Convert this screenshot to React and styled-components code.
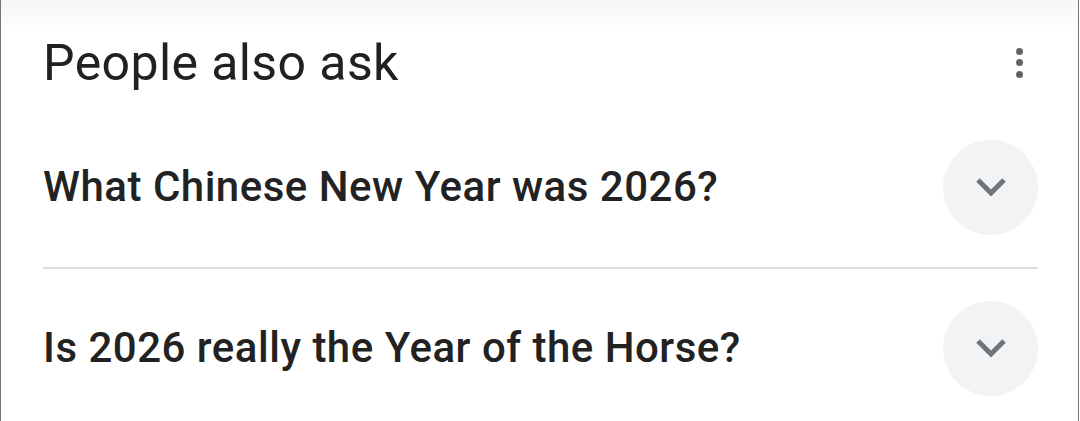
import styled, { createGlobalStyle } from "styled-components";

const GlobalStyle = createGlobalStyle`
  html, body {
    margin: 0;
    padding: 0;
    background: #fff;
  }
  body {
    font-family: Roboto, "Liberation Sans", Arial, sans-serif;
    color: #202124;
  }
`;

const Card = styled.section`
  box-sizing: content-box;
  width: 995px;
  height: 421px;
  padding: 0 40px 0 42px;
  border-left: 1px solid #767676;
  border-right: 1px solid #767676;
  background: linear-gradient(#f6f6f6 0, #fff 32px);
  overflow: hidden;
`;

const Header = styled.div`
  display: flex;
  align-items: center;
  justify-content: space-between;
  height: 89px;
  padding-top: 18px;
`;

const Title = styled.h2`
  margin: 0;
  font-size: 50px;
  font-weight: 400;
  line-height: 60px;
  letter-spacing: 0.4px;
`;

const MenuButton = styled.div`
  display: flex;
  flex-direction: column;
  align-items: center;
  gap: 4.5px;
  width: 24px;
  margin-right: 7px;
`;

const Dot = styled.span`
  width: 7px;
  height: 7px;
  border-radius: 50%;
  background: #5f6368;
`;

const Row = styled.div`
  display: flex;
  align-items: center;
  justify-content: space-between;
  height: 160px;
  box-sizing: border-box;
  border-top: ${(p) => (p.$divided ? "2px solid #dadce0" : "none")};
`;

const Question = styled.span`
  font-size: 42px;
  font-weight: 500;
  line-height: 50px;
  letter-spacing: 0.5px;
  color: #222;
`;

const Toggle = styled.div`
  width: 95px;
  height: 95px;
  border-radius: 50%;
  background: #f1f3f4;
  display: flex;
  align-items: center;
  justify-content: center;
  flex-shrink: 0;
`;

const Chevron = () => (
  <svg width="34" height="22" viewBox="0 0 34 22">
    <polyline
      points="4,4 17,17 30,4"
      fill="none"
      stroke="#70757a"
      strokeWidth="5"
    />
  </svg>
);

const QUESTIONS = [
  "What Chinese New Year was 2026?",
  "Is 2026 really the Year of the Horse?",
];

export default function App() {
  return (
    <>
      <GlobalStyle />
      <Card>
        <Header>
          <Title>People also ask</Title>
          <MenuButton>
            <Dot />
            <Dot />
            <Dot />
          </MenuButton>
        </Header>
        {QUESTIONS.map((q, i) => (
          <Row key={q} $divided={i > 0}>
            <Question>{q}</Question>
            <Toggle>
              <Chevron />
            </Toggle>
          </Row>
        ))}
      </Card>
    </>
  );
}
